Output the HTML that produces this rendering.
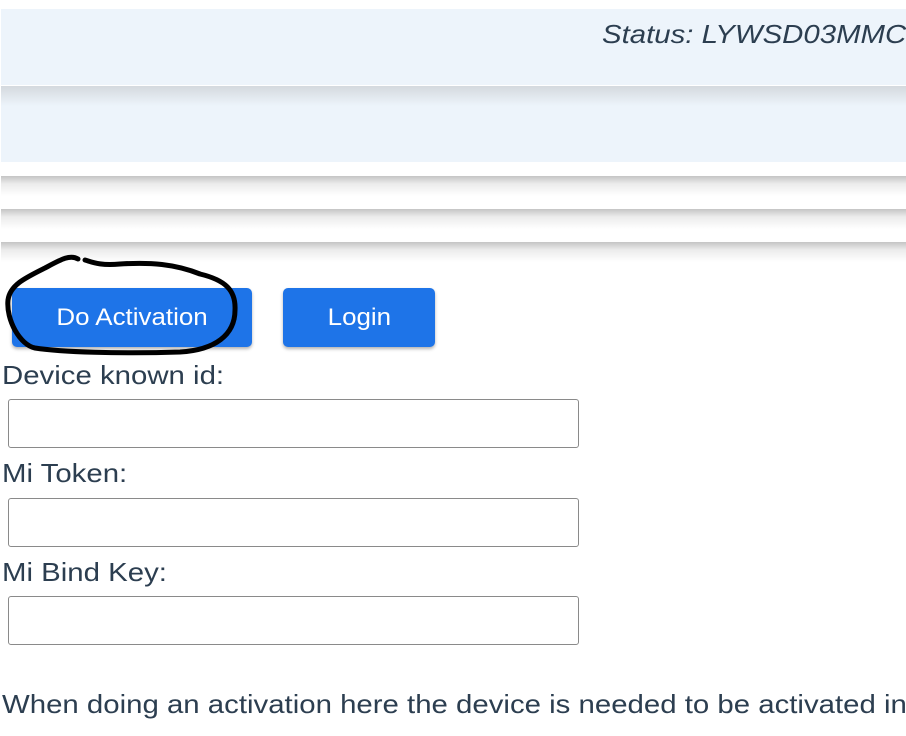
<!DOCTYPE html>
<html><head><style>
body{margin:0;width:906px;height:736px;overflow:hidden;background:#fff;font-family:"Liberation Sans",sans-serif;color:#2c3e50;position:relative}
.a{position:absolute}
.band{left:1px;width:905px;background:#edf4fb}
.sh{left:1px;width:905px;height:20px;background:linear-gradient(#c4c4c4,#ececec 40%,#fff)}
.btn{background:#1e74e8;color:#fff;border-radius:5px;font-size:24px;text-align:center;line-height:59px;height:59px;top:288px;box-shadow:0 2px 3px rgba(0,0,0,.3)}
.btn span{display:inline-block;transform:scaleX(1.08)}
.lbl{left:2px;font-size:26px;transform:scaleX(1.13);transform-origin:left;white-space:nowrap}
.inp{left:8px;width:569px;height:47px;border:1px solid #8a8a8a;border-radius:3px}
</style></head><body>
<div class="a band" style="top:9px;height:76px"></div>
<div class="a" style="top:19px;right:0;font-size:26px;font-style:italic;transform:scaleX(1.13);transform-origin:right;white-space:nowrap">Status: LYWSD03MMC</div>
<div class="a band" style="top:86px;height:76px;background:linear-gradient(#d4d9de,#edf4fb 20px)"></div>
<div class="a sh" style="top:176px"></div>
<div class="a sh" style="top:209px"></div>
<div class="a sh" style="top:242px"></div>
<div class="a btn" style="left:12px;width:240px"><span>Do Activation</span></div>
<div class="a btn" style="left:283px;width:152px"><span>Login</span></div>
<svg class="a" style="left:0;top:250px" width="260" height="110"><path d="M78 9 C70 4 60 10 45 18 C25 28 10 35 8 50 C6 70 20 95 35 98 C60 102 120 104 180 102 C215 100 235 85 235 60 C236 40 225 30 200 24 C175 14 150 12 120 14 C100 16 92 12 85 10" fill="none" stroke="#000" stroke-width="5" stroke-linecap="round"/></svg>
<div class="a lbl" style="top:360px">Device known id:</div>
<div class="a inp" style="top:399px"></div>
<div class="a lbl" style="top:458px">Mi Token:</div>
<div class="a inp" style="top:498px"></div>
<div class="a lbl" style="top:557px">Mi Bind Key:</div>
<div class="a inp" style="top:596px"></div>
<div class="a lbl" style="top:689px">When doing an activation here the device is needed to be activated in</div>
</body></html>
